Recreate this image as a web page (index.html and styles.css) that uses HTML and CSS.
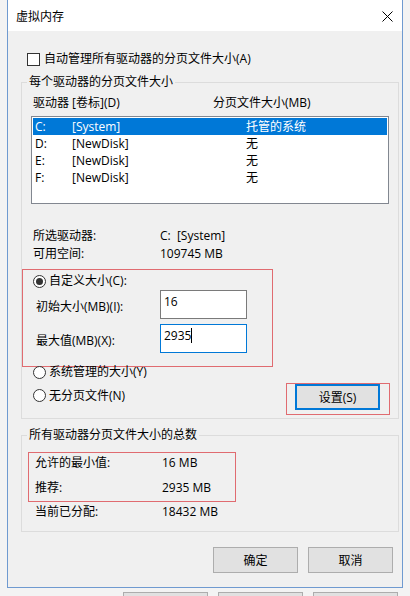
FILE: index.html
```html
<!DOCTYPE html>
<html lang="zh-CN">

<head>
  <meta charset="UTF-8" />
  <meta name="viewport" content="width=device-width, initial-scale=1.0" />
  <title>虚拟内存</title>
  <link rel="stylesheet" href="styles.css">
</head>

<body>
  <section class="window">
    <div class="titlebar">
      <span class="title">虚拟内存</span>
      <svg class="close" width="11" height="11" viewBox="0 0 11 11">
        <path d="M0.5 0.5 L10.5 10.5 M10.5 0.5 L0.5 10.5" stroke="#000" stroke-width="1" fill="none" />
      </svg>
    </div>

    <div class="client">
      <div class="check-row"><span class="checkbox"></span>自动管理所有驱动器的分页文件大小(A)</div>

      <fieldset class="group group-drives">
        <legend>每个驱动器的分页文件大小</legend>
        <div class="list-head">
          <span class="col-drive">驱动器 [卷标](D)</span>
          <span>分页文件大小(MB)</span>
        </div>
        <ul class="listbox">
          <li class="selected"><span class="drive">C:</span><span class="volume">[System]</span><span>托管的系统</span></li>
          <li><span class="drive">D:</span><span class="volume">[NewDisk]</span><span>无</span></li>
          <li><span class="drive">E:</span><span class="volume">[NewDisk]</span><span>无</span></li>
          <li><span class="drive">F:</span><span class="volume">[NewDisk]</span><span>无</span></li>
        </ul>

        <div class="info">
          <div class="info-row"><span class="info-key">所选驱动器:</span><span>C:&nbsp;&nbsp;[System]</span></div>
          <div class="info-row"><span class="info-key">可用空间:</span><span>109745 MB</span></div>
        </div>

        <div class="mark mark-custom">
          <div class="radio-row"><span class="radio checked"></span>自定义大小(C):</div>
          <div class="field-row">
            <span class="field-label">初始大小(MB)(I):</span>
            <div class="edit">16</div>
          </div>
          <div class="field-row">
            <span class="field-label">最大值(MB)(X):</span>
            <div class="edit focused">2935<span class="caret"></span></div>
          </div>
        </div>

        <div class="radio-row option"><span class="radio"></span>系统管理的大小(Y)</div>
        <div class="set-row">
          <div class="radio-row"><span class="radio"></span>无分页文件(N)</div>
          <div class="mark mark-set"><button class="btn btn-default">设置(S)</button></div>
        </div>
      </fieldset>

      <fieldset class="group group-total">
        <legend>所有驱动器分页文件大小的总数</legend>
        <div class="mark mark-total">
          <div class="total-row"><span class="total-key">允许的最小值:</span><span>16 MB</span></div>
          <div class="total-row"><span class="total-key">推荐:</span><span>2935 MB</span></div>
        </div>
        <div class="total-row current"><span class="total-key">当前已分配:</span><span>18432 MB</span></div>
      </fieldset>

      <div class="dialog-buttons">
        <button class="btn">确定</button>
        <button class="btn">取消</button>
      </div>
    </div>
  </section>

  <div class="backdrop-buttons">
    <span></span>
    <span></span>
    <span></span>
  </div>
</body>

</html>
```

FILE: styles.css
```css
:root {
  --face: #f0f0f0;
  --frame: #6f9ad0;
  --group-line: #dcdcdc;
  --accent: #0078d7;
  --mark: #e06b70;
  --btn: #e1e1e1;
  --btn-border: #adadad;
  --ink: #000000;
}

* {
  box-sizing: border-box;
}

html,
body {
  margin: 0;
}

body {
  width: 410px;
  height: 596px;
  overflow: hidden;
  background: #f3f3f3;
  font-family: "Open Sans", "Noto Sans CJK SC", sans-serif;
  font-size: 12px;
  color: var(--ink);
}

.window {
  margin-left: 7px;
  width: 396px;
  border: 1px solid var(--frame);
  border-top: none;
  background: var(--face);
}

.titlebar {
  height: 31px;
  background: #ffffff;
  display: flex;
  align-items: center;
  justify-content: space-between;
  padding: 1px 9px 0 8px;
}

.client {
  padding: 20px 0 14px 0;
}

.check-row {
  display: flex;
  align-items: center;
  height: 16px;
  line-height: 16px;
  margin-left: 19px;
}

.checkbox {
  width: 13px;
  height: 13px;
  border: 1px solid #333333;
  background: #ffffff;
  margin-right: 4px;
}

.group {
  margin: 7px 3px 0 13px;
  padding: 0 0 3px 0;
  border: 1px solid var(--group-line);
  min-width: 0;
}

.group legend {
  margin-left: 5px;
  padding: 0 2px;
  line-height: 16px;
}

.list-head {
  display: flex;
  margin: 5px 0 0 11px;
  line-height: 16px;
}

.col-drive {
  width: 180px;
}

.listbox {
  list-style: none;
  margin: 5px 0 0 9px;
  padding: 1px;
  width: 358px;
  height: 88px;
  border: 1px solid #828790;
  background: #ffffff;
}

.listbox li {
  display: flex;
  height: 17px;
  line-height: 17px;
  padding-left: 2px;
}

.listbox li.selected {
  background: var(--accent);
  color: #ffffff;
}

.drive {
  width: 37px;
}

.volume {
  width: 174px;
}

.info {
  margin: 23px 0 0 11px;
}

.info-row {
  display: flex;
  line-height: 18px;
}

.info-key {
  width: 127px;
}

.mark {
  border: 1px solid var(--mark);
}

.mark-custom {
  width: 251px;
  margin: 6px 0 -3px 0;
  padding: 3px 0 13px 0;
}

.radio-row {
  display: flex;
  align-items: center;
  height: 16px;
  line-height: 16px;
}

.mark-custom .radio-row {
  margin-left: 10px;
}

.radio {
  width: 13px;
  height: 13px;
  border: 1px solid #333333;
  border-radius: 50%;
  background: #ffffff;
  margin-right: 3px;
  display: flex;
  align-items: center;
  justify-content: center;
}

.radio.checked::after {
  content: "";
  width: 7px;
  height: 7px;
  border-radius: 50%;
  background: #333333;
}

.field-row {
  display: flex;
  align-items: center;
  margin: 1px 0 0 13px;
}

.field-row + .field-row {
  margin-top: 5px;
}

.field-label {
  width: 124px;
  margin-top: 5px;
  line-height: 16px;
}

.edit {
  width: 87px;
  height: 29px;
  border: 1px solid #7a7a7a;
  background: #ffffff;
  padding: 3px 0 0 3px;
  line-height: 16px;
}

.edit.focused {
  border-color: var(--accent);
}

.caret {
  display: inline-block;
  width: 1px;
  height: 15px;
  background: var(--ink);
  vertical-align: -3px;
}

.option {
  margin-left: 11px;
}

.set-row {
  display: flex;
  align-items: center;
  justify-content: space-between;
  margin-left: 11px;
}

.set-row .radio-row {
  margin-bottom: 4px;
}

.mark-set {
  margin: 3px 8px 0 0;
  padding: 0 9px 4px 8px;
}

.btn {
  width: 85px;
  height: 26px;
  padding: 0;
  background: var(--btn);
  border: 1px solid var(--btn-border);
  font-family: inherit;
  font-size: 12px;
  color: var(--ink);
}

.btn-default {
  border: 2px solid var(--accent);
}

.group-total {
  margin-top: 8px;
  padding-bottom: 9px;
}

.mark-total {
  width: 208px;
  margin: 9px 0 0 6px;
  padding: 0 0 3px 6px;
}

.total-row {
  display: flex;
  line-height: 20px;
}

.total-row + .total-row {
  margin-top: 5px;
}

.total-key {
  width: 127px;
}

.total-row.current {
  margin: 0 0 0 13px;
}

.dialog-buttons {
  display: flex;
  justify-content: flex-end;
  gap: 10px;
  margin: 15px 9px 0 0;
}

.backdrop-buttons {
  display: flex;
  justify-content: flex-end;
  gap: 10px;
  margin-right: 12px;
  padding-top: 4px;
}

.backdrop-buttons span {
  width: 85px;
  height: 12px;
  background: var(--btn);
  border: 1px solid var(--btn-border);
}
```
